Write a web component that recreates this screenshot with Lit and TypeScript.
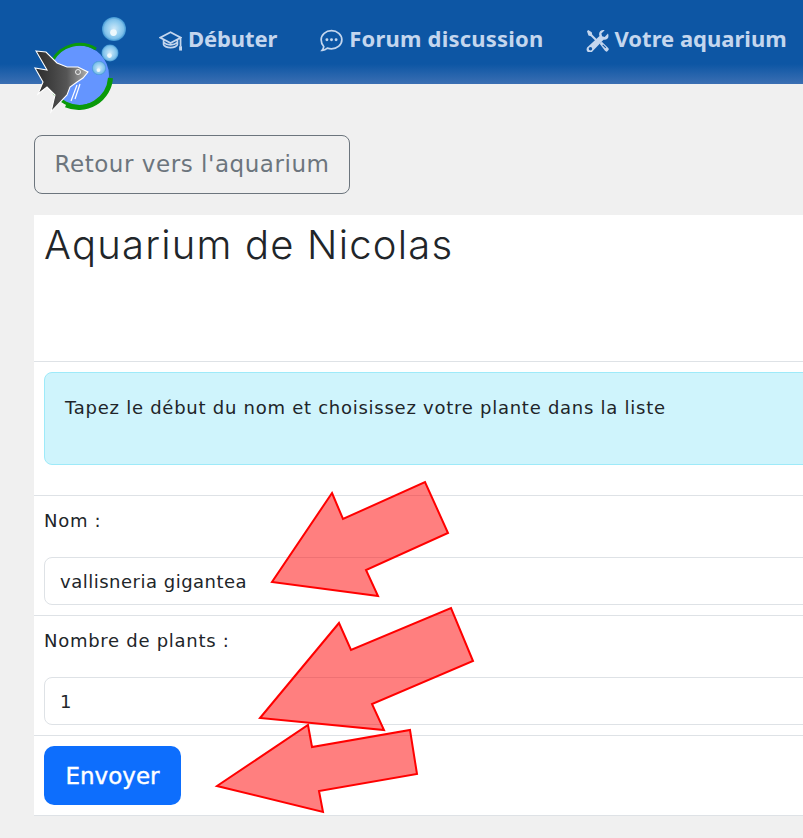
import { LitElement, html, css, svg } from 'lit';
import { customElement } from 'lit/decorators.js';

const capIcon = svg`<path d="M8 2.200 .8 6 8 9.800 15.200 6Z M3.200 7.300v3.500c0 1 2.300 2.200 4.800 2.200s4.800-1.200 4.800-2.200V7.300 M3.400 9.500c1 .9 2.800 1.500 4.600 1.500s3.600-.6 4.600-1.500 M15 6.200v6" fill="none" stroke="currentColor" stroke-width="1.200"/><rect x="14" y="12" width="2" height="3" fill="currentColor"/>`;

const chatIcon = svg`<path d="M8 1.200c4 0 7.200 2.800 7.200 6.300S12 13.800 8 13.800c-1 0-2-.2-2.900-.5-.8.7-2 1.400-3.600 1.500.6-.7 1-1.700 1.100-2.600C1.500 11 .8 9.300.8 7.500.8 4 4 1.200 8 1.200Z" fill="none" stroke="currentColor" stroke-width="1.200"/><circle cx="4.800" cy="7.500" r="1" fill="currentColor"/><circle cx="8" cy="7.500" r="1" fill="currentColor"/><circle cx="11.200" cy="7.500" r="1" fill="currentColor"/>`;

const toolsIcon = svg`<path d="M1.500.7 4 2.300l.4 1.700 4.200 4.200-1 1-4.200-4.200-1.700-.4L.7 1.500Z" fill="currentColor"/><path d="M15.300 3.200 13 5.500l-1.800-.5-.5-1.800 2.300-2.300c-1.700-.6-3.800.5-3.900 2.500 0 .5.100 1 .3 1.400L1.500 12.200a2.300 2.300 0 1 0 3.200 3.100l7.500-7.900c2 .6 4.300-1.100 3.100-4.200Z" fill="currentColor"/><circle cx="3.100" cy="13.700" r="1.200" fill="#0f56a4"/><path d="m9.500 10.300 1.500-1.500 4.300 4.300a1.300 1.300 0 0 1-.1 2 1.300 1.300 0 0 1-2 .1Z" fill="currentColor"/><path d="m11.600 11 2.200 2.200" stroke="#0f56a4" stroke-width=".7"/>`;

const arrows = [
  '332,493 343,519 425,482 448,533 366,570 378,596 272,582',
  '339,623 351,650 451,608 473,661 372,704 384,730 260,718',
  '308,725 312,747 410,730 417,774 319,791 323,812 217,786',
];

// cx, cy, r of the three bubbles in the logo
const bubbles = [
  [114, 29, 12],
  [110, 53, 8.5],
  [99, 68, 7],
];

@customElement('app-root')
export class AppRoot extends LitElement {
  static styles = css`
    :host {
      display: block;
      position: relative;
      width: 803px;
      height: 838px;
      overflow: hidden;
      background: #f0f0f0;
      font-family: "DejaVu Sans", sans-serif;
      color: #212529;
    }
    header {
      height: 84px;
      box-sizing: border-box;
      background: linear-gradient(to bottom, #0d56a4 0, #0d56a4 64px, #3b6fb3 84px);
      display: flex;
      align-items: flex-start;
      padding: 24px 0 0 159px;
      gap: 43px;
      white-space: nowrap;
    }
    .nav {
      display: flex;
      align-items: center;
      gap: 6px;
      font-family: "Noto Sans", sans-serif;
      font-size: 22px;
      font-weight: 700;
      line-height: 26px;
      letter-spacing: 0.2px;
      color: #c4d6ee;
    }
    .nav:first-child { letter-spacing: -0.1px; }
    .nav:last-child { letter-spacing: 0; margin-left: -1px; }
    .nav svg { width: 23px; height: 23px; margin-top: 5px; }
    .logo {
      position: absolute;
      left: 30px;
      top: 15px;
      width: 100px;
      height: 100px;
    }
    main { padding: 51px 0 0 34px; }
    .back {
      display: inline-block;
      box-sizing: border-box;
      height: 59px;
      width: 316px;
      border: 1px solid #6c757d;
      border-radius: 8px;
      text-align: center;
      line-height: 57px;
      font-size: 23px;
      letter-spacing: 0.55px;
      color: #6c757d;
    }
    .card {
      margin-top: 21px;
      width: 800px;
      background: #fff;
    }
    .row {
      border-bottom: 1px solid #dee2e6;
      padding: 10px;
      box-sizing: border-box;
    }
    h1 {
      margin: 0;
      font-family: "Inter", sans-serif;
      font-weight: 300;
      font-size: 40px;
      line-height: 60px;
      letter-spacing: 1.200px;
    }
    .title { padding-top: 0; padding-bottom: 0; height: 147px; }
    .alert {
      height: 93px;
      box-sizing: border-box;
      border: 1px solid #9eeaf9;
      border-radius: 8px;
      background: #cff4fc;
      padding: 20px;
      font-size: 18px;
      line-height: 30px;
      letter-spacing: 0.74px;
      white-space: nowrap;
    }
    .info { height: 134px; }
    label {
      display: block;
      font-size: 18px;
      line-height: 30px;
      letter-spacing: 0.72px;
      height: 51px;
    }
    .input {
      height: 48px;
      box-sizing: border-box;
      border: 1px solid #dee2e6;
      border-radius: 8px;
      padding: 0 15px;
      font-size: 18px;
      line-height: 47px;
      letter-spacing: 0.5px;
    }
    .field { height: 120px; }
    .send {
      width: 137px;
      height: 59px;
      background: #0d6efd;
      color: #fff;
      border-radius: 10px;
      text-align: center;
      line-height: 61px;
      font-size: 23px;
      -webkit-text-stroke: 0.4px #fff;
    }
    .submit { height: 80px; }
    .overlay {
      position: absolute;
      left: 0;
      top: 0;
      width: 803px;
      height: 838px;
      pointer-events: none;
    }
    .overlay polygon {
      fill: rgba(255, 0, 0, 0.5);
      stroke: #f00;
      stroke-width: 2;
    }
  `;

  private renderLogo() {
    return html`<svg class="logo" viewBox="30 15 100 100">
      <defs>
        <linearGradient id="fish" x1="0" y1="0" x2="1" y2="0">
          <stop offset="0" stop-color="#2b2b2b"/>
          <stop offset="0.6" stop-color="#555"/>
          <stop offset="1" stop-color="#b0b0b0"/>
        </linearGradient>
        <radialGradient id="bub" cx="0.5" cy="0.5" r="0.5">
          <stop offset="0" stop-color="#cfe9f9"/>
          <stop offset="0.6" stop-color="#92cdf0"/>
          <stop offset="0.8" stop-color="#7fc0ea"/>
          <stop offset="1" stop-color="#3f96d2"/>
        </radialGradient>
      </defs>
      <circle cx="79" cy="75.500" r="30" fill="#6495ff"/>
      <path d="M108 88A31 31 0 1 1 96 49" fill="none" stroke="#0a9a0a" stroke-width="3"/>
      <path d="M110.500 78A32 32 0 0 1 66 105" fill="none" stroke="#0a9a0a" stroke-width="5"/>
      <polygon points="36,51 46,52 57,63 67,67 78,67 88,72 83,78 77,82 70,87 67,95 51,112 55,95 47,87 38,94 43,82 35,68 47,70" fill="url(#fish)" stroke="#fff" stroke-width="1.100"/>
      <circle cx="78" cy="72" r="2.500" fill="none" stroke="#eee" stroke-width="1"/>
      <path d="M77 85 71 101M80 84 75 99" stroke="#fff" stroke-width="1.200"/>
      ${bubbles.map(([x, y, r]) => svg`
        <circle cx=${x} cy=${y} r=${r} fill="url(#bub)"></circle>
        <circle cx=${x - 0.5} cy=${y + r * 0.3} r=${r * 0.28} fill="#eef8fd"></circle>
      `)}
    </svg>`;
  }

  render() {
    return html`
      <header>
        <div class="nav"><svg viewBox="0 0 16 16">${capIcon}</svg>Débuter</div>
        <div class="nav"><svg viewBox="0 0 16 16">${chatIcon}</svg>Forum discussion</div>
        <div class="nav"><svg viewBox="0 0 16 16">${toolsIcon}</svg>Votre aquarium</div>
      </header>
      ${this.renderLogo()}
      <main>
        <div class="back">Retour vers l'aquarium</div>
        <div class="card">
          <div class="row title"><h1>Aquarium de Nicolas</h1></div>
          <div class="row info">
            <div class="alert">Tapez le début du nom et choisissez votre plante dans la liste</div>
          </div>
          <div class="row field">
            <label>Nom :</label>
            <div class="input">vallisneria gigantea</div>
          </div>
          <div class="row field">
            <label>Nombre de plants :</label>
            <div class="input">1</div>
          </div>
          <div class="row submit"><div class="send">Envoyer</div></div>
        </div>
      </main>
      <svg class="overlay" viewBox="0 0 803 838">
        ${arrows.map((p) => svg`<polygon points=${p}></polygon>`)}
      </svg>
    `;
  }
}
